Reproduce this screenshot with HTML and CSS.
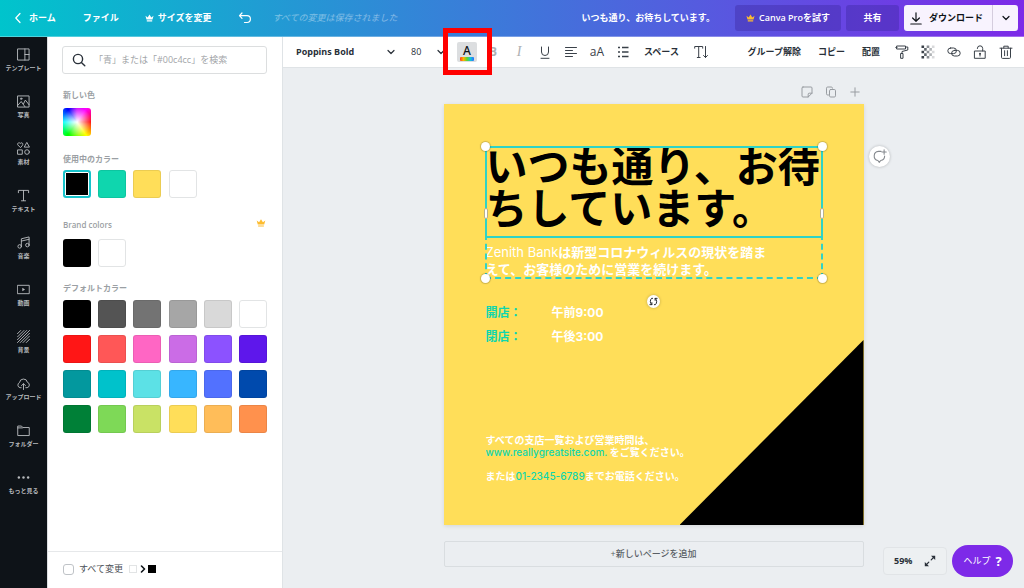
FILE: index.html
```html
<!DOCTYPE html>
<html lang="ja">
<head>
<meta charset="utf-8">
<title>いつも通り、お待ちしています。</title>
<meta name="viewport" content="width=device-width, initial-scale=1">
<link rel="stylesheet" href="styles.css">
</head>
<body>
<svg class="defs" aria-hidden="true">
  <symbol id="crown" viewBox="0 0 12 10"><path d="M.6 2 3.600 4.200 6 .4l2.400 3.800 3-2.200-1.400 5H2zM2.400 8h7.200v1.500H2.400z" fill="currentColor"/></symbol>
  <symbol id="down" viewBox="0 0 10 10"><path d="M2 3.500 5 6.500 8 3.500" class="ln"/></symbol>
</svg>

<header class="top">
  <nav class="top-left">
    <button class="home"><svg width="8" height="12" viewBox="0 0 8 12"><path d="M6 1.500 1.800 6 6 10.500" class="ln"/></svg>ホーム</button>
    <button class="file">ファイル</button>
    <button class="resize"><svg width="9" height="8"><use href="#crown"/></svg>サイズを変更</button>
    <button class="undo" aria-label="元に戻す"><svg width="14" height="12" viewBox="0 0 14 12"><path d="M4 1 1.500 3.700 4 6.400M1.500 3.700H9a3.400 3.400 0 0 1 0 6.800H6.500" class="ln"/></svg></button>
    <span class="saved">すべての変更は保存されました</span>
  </nav>
  <div class="top-right">
    <span class="doc-name">いつも通り、お待ちしています。</span>
    <button class="pill pro"><svg width="9" height="8"><use href="#crown"/></svg>Canva Proを試す</button>
    <button class="pill share">共有</button>
    <div class="download">
      <button class="dl-main"><svg width="12" height="13" viewBox="0 0 12 13"><path d="M6 .8v8.400M2.600 6 6 9.300 9.400 6M.8 12h10.400" class="ln"/></svg>ダウンロード</button>
      <button class="dl-more" aria-label="その他"><svg width="10" height="10"><use href="#down"/></svg></button>
    </div>
  </div>
</header>

<div class="body">
  <nav class="rail">
    <button><svg viewBox="0 0 14 14"><path d="M1 1h12v12H1zM8.500 1v12M8.500 7H13" class="ln"/></svg>テンプレート</button>
    <button><svg viewBox="0 0 14 14"><path d="M1 1h12v12H1zM1 11l3.500-4 4 5.500M7 9.500l2-4 4 5" class="ln"/><circle cx="4.500" cy="4" r=".8" class="ln"/></svg>写真</button>
    <button><svg viewBox="0 0 14 14"><path d="M3.500 5.800.9 3.200C-.2 1.600 2.200-.2 3.500 1.600 4.800-.2 7.200 1.600 6.100 3.200zM10.800.8l2.600 4.700H8.200zM1 8.500h4.700v4.700H1z" class="ln"/><circle cx="10.800" cy="10.800" r="2.500" class="ln"/></svg>素材</button>
    <button><svg viewBox="0 0 14 14"><path d="M1.500 4V1.500h11V4M7 1.500v11M4.800 12.700h4.400" class="ln"/></svg>テキスト</button>
    <button><svg viewBox="0 0 14 14"><path d="M4.700 11V3L13 1v8.500M4.700 5.500 13 3.500" class="ln"/><circle cx="2.900" cy="11.200" r="1.900" class="ln"/><circle cx="11.200" cy="9.800" r="1.900" class="ln"/></svg>音楽</button>
    <button><svg viewBox="0 0 14 14"><path d="M.8 2.500h12.400v9H.8z" class="ln"/><path d="M5.700 5v4l3-2z" fill="currentColor"/></svg>動画</button>
    <button><svg viewBox="0 0 14 14"><path d="M.5 4 4 .5M.5 7.500l7-7M.5 10.500l10-10M.5 13.500l13-13M3.500 13.500l10-10M6.500 13.500l7-7M10 13.500l3.500-3.500" class="ln"/></svg>背景</button>
    <button><svg viewBox="0 0 14 14"><path d="M4.500 11.500H3.300A2.900 2.900 0 0 1 2.700 6a4.300 4.300 0 0 1 8.500-.3 3 3 0 0 1-.3 5.800H9.500M7 13.500v-6M4.800 9.300 7 7.200l2.200 2.100" class="ln"/></svg>アップロード</button>
    <button><svg viewBox="0 0 14 14"><path d="M.8 12V2.200h4l1.500 1.600h6.900V12zM.8 4.200h5" class="ln"/></svg>フォルダー</button>
    <button><svg viewBox="0 0 14 14"><g fill="currentColor"><circle cx="2" cy="7" r="1.300"/><circle cx="7" cy="7" r="1.300"/><circle cx="12" cy="7" r="1.300"/></g></svg>もっと見る</button>
  </nav>

  <aside class="panel">
    <div class="panel-main">
      <label class="search">
        <svg width="14" height="14" viewBox="0 0 14 14"><circle cx="6" cy="6" r="4.600" class="ln"/><path d="m9.400 9.400 3.400 3.400" class="ln"/></svg>
        <input type="text" aria-label="色を検索" placeholder="「青」または「#00c4cc」を検索">
      </label>
      <section class="sec-new">
        <h2>新しい色</h2>
        <div class="swatches"><button class="sw rainbow" aria-label="新しい色"></button></div>
      </section>
      <section class="sec-used">
        <h2>使用中のカラー</h2>
        <div class="swatches">
          <button class="sw c-black selected" aria-label="黒"></button><button class="sw c-mint" aria-label="ミント"></button><button class="sw c-yellow" aria-label="黄"></button><button class="sw c-white" aria-label="白"></button>
        </div>
      </section>
      <section class="sec-brand">
        <h2>Brand colors <svg class="gold" width="10" height="8"><use href="#crown"/></svg></h2>
        <div class="swatches"><button class="sw c-black" aria-label="黒"></button><button class="sw c-white" aria-label="白"></button></div>
      </section>
      <section class="sec-default">
        <h2>デフォルトカラー</h2>
        <div class="swatches">
          <button class="sw c-black" aria-label="黒"></button><button class="sw c-g1" aria-label="濃い灰"></button><button class="sw c-g2" aria-label="灰"></button><button class="sw c-g3" aria-label="中灰"></button><button class="sw c-g4" aria-label="薄い灰"></button><button class="sw c-white" aria-label="白"></button>
          <button class="sw c-red" aria-label="赤"></button><button class="sw c-coral" aria-label="コーラル"></button><button class="sw c-pink" aria-label="ピンク"></button><button class="sw c-orchid" aria-label="ラベンダー"></button><button class="sw c-purple" aria-label="紫"></button><button class="sw c-violet" aria-label="青紫"></button>
          <button class="sw c-teal" aria-label="青緑"></button><button class="sw c-cyan" aria-label="シアン"></button><button class="sw c-aqua" aria-label="アクア"></button><button class="sw c-sky" aria-label="空色"></button><button class="sw c-blue" aria-label="青"></button><button class="sw c-navy" aria-label="紺"></button>
          <button class="sw c-green" aria-label="緑"></button><button class="sw c-grass" aria-label="黄緑"></button><button class="sw c-lime" aria-label="ライム"></button><button class="sw c-yellow" aria-label="黄"></button><button class="sw c-peach" aria-label="ピーチ"></button><button class="sw c-orange" aria-label="オレンジ"></button>
        </div>
      </section>
    </div>
    <label class="change-all">
      <input type="checkbox"><span>すべて変更</span>
      <i class="chip c-white"></i><svg width="6" height="8" viewBox="0 0 6 8"><path d="M1.500 1 4.500 4 1.500 7" class="ln"/></svg><i class="chip c-black"></i>
    </label>
  </aside>

  <main class="stage">
    <div class="toolbar">
      <div class="tools">
        <span class="pick font"><select aria-label="フォント"><option>Poppins Bold</option></select><svg width="10" height="10"><use href="#down"/></svg></span>
        <span class="pick size"><select aria-label="サイズ"><option>80</option></select><svg width="10" height="10"><use href="#down"/></svg></span>
        <button class="ic color" aria-label="テキストの色"><span class="letter">A</span><span class="bar"></span></button>
        <button class="ic bold dim">B</button>
        <button class="ic italic dim">I</button>
        <button class="ic" aria-label="下線"><svg viewBox="0 0 14 14"><path d="M3.500 2v5a3.500 3.500 0 0 0 7 0V2M3 13.300h8" class="ln"/></svg></button>
        <button class="ic" aria-label="配置"><svg viewBox="0 0 14 14"><path d="M1.500 2.500h11M1.500 5.500h7M1.500 8.500h11M1.500 11.500h7" class="ln"/></svg></button>
        <button class="ic case">aA</button>
        <button class="ic" aria-label="リスト"><svg viewBox="0 0 14 14"><path d="M6 2.500h6.500M6 7h6.500M6 11.500h6.500M2 2.500h2M2 7h2M2 11.500h2" class="ln thick"/></svg></button>
        <button class="word space">スペース</button>
        <button class="ic" aria-label="縦書き"><svg viewBox="0 0 14 14"><path d="M.7 3.200V1.500h8v1.700M4.700 1.500v11M3.300 12.500h2.800M11.500 1.500v11M9.500 10.500l2 2 2-2" class="ln"/></svg></button>
      </div>
      <div class="tools end">
        <button class="word">グループ解除</button>
        <button class="word">コピー</button>
        <button class="word">配置</button>
        <div class="icons">
          <button class="ic" aria-label="スタイルをコピー"><svg viewBox="0 0 14 14"><path d="M2 1h8.500v3H2zM2 2.500H.800M10.500 2h2.300v3L7 6.500v2M6 8.500h2v4.800H6z" class="ln"/></svg></button>
          <button class="ic" aria-label="透明度"><svg viewBox="0 0 14 14"><g fill="currentColor"><path d="M.5.500h2.600v2.600H.5zM.5 5.700h2.600v2.600H.5zM.5 10.900h2.600v2.600H.5z"/><path opacity=".8" d="M3.100 3.100h2.600v2.600H3.100zM3.100 8.300h2.600v2.600H3.100z"/><path opacity=".6" d="M5.700.500h2.600v2.600H5.700zM5.700 5.700h2.600v2.600H5.700zM5.700 10.900h2.600v2.600H5.700z"/><path opacity=".4" d="M8.300 3.100h2.600v2.600H8.300zM8.300 8.300h2.600v2.600H8.300z"/><path opacity=".2" d="M10.900.500h2.600v2.600h-2.600zM10.900 5.700h2.600v2.600h-2.600zM10.900 10.900h2.600v2.600h-2.600z"/></g></svg></button>
          <button class="ic" aria-label="リンク"><svg viewBox="0 0 14 14"><rect x=".8" y="3" width="8.600" height="5.600" rx="2.800" class="ln"/><rect x="4.600" y="5.400" width="8.600" height="5.600" rx="2.800" class="ln"/></svg></button>
          <button class="ic" aria-label="ロック"><svg viewBox="0 0 14 14"><path d="M1.800 6h10.400v7.300H1.800zM4.300 3.500a2.700 2.700 0 0 1 5.400 0V6M7 8.500v2.600" class="ln"/><circle cx="7" cy="8.800" r="1" fill="currentColor"/></svg></button>
          <button class="ic" aria-label="削除"><svg viewBox="0 0 14 14"><path d="M1 3.200h12M4.800 3V1.200h4.400V3M2.500 3.200v9.200q0 1 1 1h7q1 0 1-1V3.200M5.600 5.700v5M8.400 5.700v5" class="ln"/></svg></button>
        </div>
      </div>
    </div>

    <div class="desk">
      <div class="page-tools">
        <button aria-label="メモ"><svg viewBox="0 0 12 12"><path d="M2 1h8q1 0 1 1v5.200L7.200 11H2q-1 0-1-1V2q0-1 1-1zM11 7.200H8.200q-1 0-1 1V11" class="ln"/></svg></button>
        <button aria-label="ページをコピー"><svg viewBox="0 0 12 12"><path d="M3.500 9H2.700Q1.500 9 1.500 7.800V2.200Q1.500 1 2.700 1h3.600q1.200 0 1.200 1.200M5.700 3.500h3.600q1.200 0 1.200 1.200v5.100q0 1.200-1.200 1.200H5.700q-1.200 0-1.200-1.200V4.700q0-1.200 1.200-1.200z" class="ln"/></svg></button>
        <button aria-label="ページを追加"><svg viewBox="0 0 12 12"><path d="M6 1.800v8.400M1.800 6h8.400" class="ln"/></svg></button>
      </div>
      <div class="artboard">
        <div class="corner"></div>
        <h1 class="title">いつも通り、お待<br>ちしています。</h1>
        <p class="lead"><span class="thin">Zenith Bank</span>は新型コロナウィルスの現状を踏ま<br>えて、お客様のために営業を続けます。</p>
        <dl class="hours"><dt>開店：</dt><dd>午前9:00</dd><dt>閉店：</dt><dd>午後3:00</dd></dl>
        <div class="contact">
          <p>すべての支店一覧および営業時間は、<br><b>www.reallygreatsite.com.</b> をご覧ください。</p>
          <p>または<b>01-2345-6789</b>までお電話ください。</p>
        </div>
        <div class="group-box"></div>
        <div class="text-box"><i class="grip west"></i><i class="grip east"></i></div>
        <i class="knob nw"></i><i class="knob ne"></i><i class="knob sw-k"></i><i class="knob se"></i>
        <button class="rotate" aria-label="回転"><svg width="9" height="9" viewBox="0 0 10 10"><path d="M4 1.500H2.900Q1.500 2.800 1.500 5T3 8.300M1 8.500h2.200V6.300M6 8.500h1.100Q8.500 7.200 8.500 5T7 1.700M9 1.500H6.800v2.200" class="ln"/></svg></button>
        <button class="comment" aria-label="コメント"><svg width="15" height="15" viewBox="0 0 14 14"><path d="M8.500 2.200H6a4.300 4.300 0 0 0-.5 8.500l1.300 1.800 1.300-1.800a4.300 4.300 0 0 0 3.700-4.200M11.300.8v4M9.300 2.800h4" class="ln"/></svg></button>
      </div>
      <button class="add-page">+新しいページを追加</button>
      <div class="float">
        <div class="zoom"><button>59%</button><button aria-label="全画面"><svg width="12" height="12" viewBox="0 0 12 12"><path d="M7.200 4.800 10 2M4.800 7.200 2 10" class="ln"/><path d="M7 .8h4.200V5zM.8 7v4.200H5z" fill="currentColor"/></svg></button></div>
        <button class="help">ヘルプ <b>?</b></button>
      </div>
    </div>
  </main>
</div>
<div class="highlight"></div>
</body>
</html>
```

FILE: styles.css
```css
* { box-sizing: border-box; }
body {
  margin: 0; height: 100vh; display: flex; flex-direction: column; overflow: hidden;
  font: 9px/12px "Open Sans", "Noto Sans CJK JP", sans-serif; color: #293039; background: #ebeef1;
}
button, select, input { font: inherit; color: inherit; background: none; border: 0; padding: 0; margin: 0; }
h1, h2, p, dl, dd { margin: 0; }
svg { display: block; flex: none; }
.defs { position: absolute; width: 0; height: 0; }
.ln { fill: none; stroke: currentColor; stroke-width: 1.2; stroke-linecap: round; stroke-linejoin: round; }
.thick { stroke-width: 1.6; stroke-linecap: butt; }

/* Header */
.top {
  flex: none; height: 37px; display: flex; align-items: center; justify-content: space-between;
  background: linear-gradient(90deg, #00c4cc, #7d2ae8); color: #fff; font-weight: 700;
  border-bottom: 1px solid #ffffff4d; background-origin: border-box;
}
.top-left, .top-right, .top button { display: flex; align-items: center; white-space: nowrap; }
.top-left { padding-left: 14px; }
.home { gap: 7px; }
.file { margin-left: 27px; }
.resize { gap: 4px; margin-left: 26px; }
.undo { margin-left: 27px; }
.saved { margin-left: 20px; font-weight: 400; font-style: italic; opacity: .4; }
.top-right { gap: 5px; padding-right: 6px; }
.doc-name { margin-right: 15px; }
.top .pill { height: 26px; border-radius: 3px; background: #3c28a066; justify-content: center; }
.top .pro { width: 106px; gap: 4px; font-weight: 600; }
.pro svg, .gold { color: #fdbc2f; }
.top .share { width: 53px; }
.download { display: flex; height: 26px; border-radius: 3px; background: #f8f3fe; color: #0e1318; }
.top .dl-main { padding: 0 9px 0 6px; gap: 7px; }
.top .dl-more { width: 26px; justify-content: center; border-left: 1px solid #d5cdde; }

.body { flex: 1; display: flex; min-height: 0; }

/* Object rail */
.rail { flex: none; width: 47px; padding-top: 3px; background: #0e1318; color: #b7babd; }
.rail button {
  width: 100%; height: 47px; display: flex; flex-direction: column; align-items: center;
  padding-top: 8px; gap: 3px; font-size: 6px; line-height: 8px; font-weight: 700;
}
.rail svg { width: 13px; height: 13px; }
.rail .ln { stroke-width: 1; }

/* Colour panel */
.panel { flex: none; width: 236px; display: flex; flex-direction: column; background: #fff; border-left: 1px solid #dcdfe2; border-right: 1px solid #dfe3e6; }
.panel-main { flex: 1; padding: 9px 15px 0 14px; }
.search { display: flex; align-items: center; gap: 8px; height: 28px; padding: 0 9px; border: 1px solid #dcdedf; border-radius: 3px; }
.search .ln { stroke-width: 1.4; }
.search input { flex: 1; min-width: 0; outline: 0; }
.search input::placeholder { color: #a2a5a8; opacity: 1; }
.panel section { padding-left: 1px; }
.panel h2 { display: flex; justify-content: space-between; margin: 0; padding-right: 1px; font-size: 8px; line-height: 12px; font-weight: 600; color: #9b9fa4; }
.swatches { display: grid; grid-template-columns: repeat(6, 28px); justify-content: space-between; row-gap: 7px; }
.sec-new { margin-top: 15px; }
.sec-new .swatches { margin-top: 7px; }
.sec-used { margin-top: 17px; }
.sec-used .swatches { margin-top: 5px; }
.sec-brand { margin-top: 21px; }
.sec-brand .swatches { margin-top: 8px; }
.sec-default { margin-top: 15px; }
.sec-default .swatches { margin-top: 6px; }
.sw { height: 28px; border: 1px solid #00000014; border-radius: 3px; }
.selected { border: 2px solid #17c3cb; box-shadow: inset 0 0 0 1px #fff; }
.rainbow { border: 0; background: radial-gradient(circle, #fff 0, #fff0 75%), conic-gradient(#c0f, #f0f 35deg, #f00 90deg, #ff0 145deg, #0f0 215deg, #0ff 270deg, #00f 325deg, #c0f); }
.c-black { background: #000; } .c-white { background: #fff; border-color: #e2e4e5; }
.c-mint { background: #0fd6ae; } .c-yellow { background: #ffde59; }
.c-g1 { background: #545454; } .c-g2 { background: #737373; } .c-g3 { background: #a6a6a6; } .c-g4 { background: #d9d9d9; }
.c-red { background: #ff1616; } .c-coral { background: #ff5757; } .c-pink { background: #ff66c4; }
.c-orchid { background: #cb6ce6; } .c-purple { background: #8c52ff; } .c-violet { background: #5e17eb; }
.c-teal { background: #03989e; } .c-cyan { background: #00c2cb; } .c-aqua { background: #5ce1e6; }
.c-sky { background: #38b6ff; } .c-blue { background: #5271ff; } .c-navy { background: #004aad; }
.c-green { background: #008037; } .c-grass { background: #7ed957; } .c-lime { background: #c9e265; }
.c-peach { background: #ffbd59; } .c-orange { background: #ff914d; }
.change-all { flex: none; height: 37px; display: flex; align-items: center; border-top: 1px solid #e6e8ea; padding: 0 15px 2px; color: #4b5056; }
.change-all input { appearance: none; width: 11px; height: 11px; border: 1px solid #bfc3c7; border-radius: 3px; margin-right: 5px; }
.chip { width: 8px; height: 8px; }
.chip.c-white { border: 1px solid #e2e4e5; margin-left: 6px; }
.change-all svg { margin: 0 2px 0 3px; color: #0e1318; }
.change-all .ln { stroke-width: 1.6; }

/* Toolbar */
.stage { flex: 1; min-width: 0; display: flex; flex-direction: column; }
.toolbar { flex: none; height: 31px; display: flex; align-items: center; justify-content: space-between; padding: 0 8px 0 13px; background: #fff; border-bottom: 1px solid #dfe3e6; }
.tools, .icons { display: flex; align-items: center; gap: 6px; }
.tools.end { gap: 17px; }
.icons { margin-left: -5px; }
.pick { display: flex; align-items: center; justify-content: space-between; }
.pick select { appearance: none; flex: 1; min-width: 0; }
.font { width: 100px; font-weight: 700; }
.size { width: 35px; margin-left: 9px; }
.ic { width: 20px; height: 20px; display: flex; align-items: center; justify-content: center; color: #3a4149; }
.ic svg { width: 14px; height: 14px; }
.ic .ln { stroke-width: 1; }
.ic .thick { stroke-width: 1.6; }
.color { flex-direction: column; background: #dcdee0; border-radius: 2px; color: #0e1318; margin-left: 5px; }
.letter { font: 500 12px/13px "Noto Sans", sans-serif; }
.bar { width: 14px; height: 4px; border-radius: 1px; background: linear-gradient(90deg, #ff3b1f, #ffb400, #5ad62a, #14c3d8, #2f6bff); }
.bold { font-size: 12px; font-weight: 700; }
.italic { font: italic 14px/20px "Liberation Serif", serif; }
.ic.dim { color: #adb0b3; }
.case { font-size: 12px; }
.word { font-weight: 700; white-space: nowrap; }
.space { margin: 0 6px 0 5px; }

/* Work area */
.desk { flex: 1; position: relative; display: flex; flex-direction: column; align-items: center; }
.page-tools { width: 420px; display: flex; justify-content: flex-end; gap: 12px; padding: 18px 3px 6px; color: #989ca1; }
.page-tools svg { width: 12px; height: 12px; }
.page-tools .ln { stroke-width: 1; }
.artboard {
  flex: none; position: relative; width: 420px; height: 421px; background: #ffde59; color: #fff;
  box-shadow: 0 1px 4px #0000001a; font-family: Inter, "Noto Sans CJK JP", sans-serif; white-space: nowrap;
}
.artboard > * { position: absolute; }
.corner { right: 0; bottom: 0; width: 184px; height: 185px; background: #000; clip-path: polygon(100% 0, 100% 100%, 0 100%); }
.title { left: 42px; top: 42px; font-size: 42px; line-height: 42px; font-weight: 700; color: #000; }
.lead { left: 42px; top: 140px; font-size: 13px; line-height: 17px; font-weight: 700; }
.thin { font-weight: 400; }
.hours { left: 42px; top: 197px; display: grid; grid-template-columns: 66px auto; font-size: 12px; line-height: 24px; font-weight: 700; }
.hours dt, .contact b { color: #0fd6ae; }
.contact { left: 42px; top: 330px; display: grid; gap: 12px; font-size: 10px; line-height: 12px; font-weight: 700; }
.contact b { font-weight: 500; }
.group-box { left: 41px; top: 42px; width: 338px; height: 133px; border: 2px dashed #2fd3c6; }
.text-box { left: 41px; top: 42px; width: 338px; height: 92px; border: 2px solid #2fd3c6; }
.grip { position: absolute; top: 60px; width: 4px; height: 11px; border-radius: 2px; background: #fff; border: 1px solid #b8b08a; }
.west { left: -3px; } .east { right: -3px; }
.knob { width: 9px; height: 9px; border-radius: 50%; background: #fff; box-shadow: 0 0 1px 1px #0e131833; }
.nw { left: 37px; top: 38px; } .ne { left: 374px; top: 38px; }
.sw-k { left: 37px; top: 170px; } .se { left: 374px; top: 170px; }
.rotate, .comment { display: flex; align-items: center; justify-content: center; border-radius: 50%; background: #fff; box-shadow: 0 0 3px #0e131844; }
.rotate { left: 203px; top: 191px; width: 13px; height: 13px; color: #0e1318; }
.comment { left: 425px; top: 42px; width: 21px; height: 21px; color: #85898e; }
.comment .ln, .rotate .ln { stroke-width: 1; }
.add-page { width: 420px; height: 26px; margin-top: 16px; border: 1px solid #d9dde0; border-radius: 2px; color: #5a5f65; font-weight: 500; }
.float { position: absolute; right: 11px; bottom: 11px; display: flex; align-items: center; gap: 5px; }
.zoom { width: 64px; height: 28px; display: flex; align-items: center; justify-content: space-between; padding: 0 10px; border: 1px solid #e1e4e7; border-radius: 4px; font-weight: 700; background: #edf0f2; }
.help { width: 61px; height: 32px; display: flex; align-items: center; justify-content: center; gap: 5px; border-radius: 16px; background: #7d2ae8; color: #fff; }
.help b { font-size: 13px; }

/* Callout frame around the text colour button */
.highlight { position: absolute; left: 443px; top: 28px; width: 49px; height: 47px; border: 5px solid #f00; pointer-events: none; }
```
